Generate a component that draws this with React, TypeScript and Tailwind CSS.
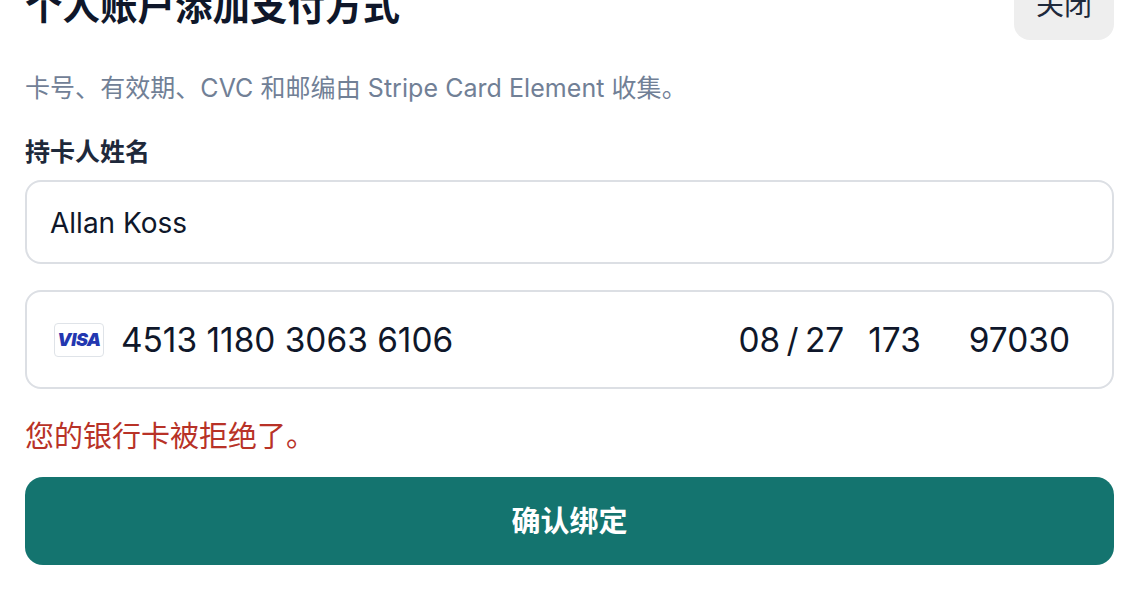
const fontStack = 'font-["Inter","Noto_Sans_CJK_SC",sans-serif]';

function VisaBadge() {
  return (
    <div className="flex h-[34px] w-[50px] shrink-0 items-center justify-center rounded-[4px] border border-[#dfe3e8] bg-white">
      <span className="font-['Inter',sans-serif] text-[18px] leading-none font-black tracking-[-0.5px] text-[#2337b0] italic">
        VISA
      </span>
    </div>
  );
}

export default function App() {
  return (
    <div className={`${fontStack} h-[589px] w-[1138px] overflow-hidden bg-white pr-[24px] pl-[25px]`}>
      {/* Header, cut off by the top of the window */}
      <div className="mt-[-20px] flex h-[60px] items-start justify-between">
        <h2 className="text-[37.5px] leading-[54px] font-semibold text-[#0f172a]">个人账户添加支付方式</h2>
        <button className="h-[60px] w-[100px] rounded-[16px] bg-[#eeeeee] text-[28px] leading-[36px] text-[#1e293b]">
          <span className="block -translate-y-[5px]">关闭</span>
        </button>
      </div>

      <p className="mt-[32px] text-[25px] leading-[32px] tracking-[0.05px] text-[#718096]">
        卡号、有效期、CVC 和邮编由 Stripe Card Element 收集。
      </p>

      <label className="mt-[32px] block text-[25px] leading-[32px] font-semibold text-[#1e293b]">持卡人姓名</label>

      <div className="mt-[12px] flex h-[84px] items-center rounded-[16px] border-2 border-[#dcdfe4] px-[23px] pt-[2px] text-[28px] text-[#0f172a]">
        Allan Koss
      </div>

      <div className="mt-[26px] flex h-[99px] items-center rounded-[16px] border-2 border-[#dcdfe4] pr-[42px] pl-[27px] text-[33.4px] text-[#0f172a]">
        <VisaBadge />
        <span className="ml-[17px] translate-y-[1px]">4513 1180 3063 6106</span>
        <span className="ml-auto translate-y-[1px] [word-spacing:-3px]">08 / 27</span>
        <span className="ml-[24px] translate-y-[1px]">173</span>
        <span className="ml-[48px] translate-y-[1px]">97030</span>
      </div>

      <p className="mt-[30px] text-[29px] leading-[36px] text-[#b83227]">您的银行卡被拒绝了。</p>

      <button className="mt-[22px] h-[88px] w-full rounded-[18px] bg-[#14746f] text-[29px] font-semibold text-white">
        <span className="block translate-y-[1px]">确认绑定</span>
      </button>
    </div>
  );
}
